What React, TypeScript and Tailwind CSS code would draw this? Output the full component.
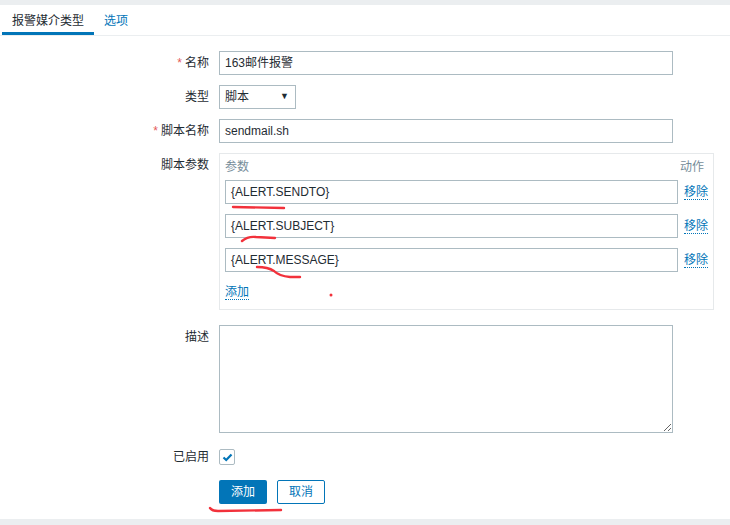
import React, { useState } from 'react'

const font = { fontFamily: '"Liberation Sans", Arial, "Noto Sans CJK SC", sans-serif' }

const Label = ({ text, req }: { text: string; req?: boolean }) => (
  <div className="flex justify-end pt-[4px] h-[24px] leading-[16px] text-[12px] text-[#1f2c33]">
    {req && <span className="text-[#e45959] mr-[3px]">*</span>}
    {text}
  </div>
)

const Input = ({ value, w = 'w-[454px]' }: { value: string; w?: string }) => (
  <div className={`${w} h-[24px] border border-[#acbbc2] bg-white px-[5px] flex items-center text-[12px] text-[#1f2c33]`}>
    {value}
  </div>
)

const Link = ({ text }: { text: string }) => (
  <span className="text-[12px] text-[#0275b8] border-b border-dotted border-[#0275b8] leading-[14px]">{text}</span>
)

export default function App() {
  const [params] = useState(['{ALERT.SENDTO}', '{ALERT.SUBJECT}', '{ALERT.MESSAGE}'])

  return (
    <div className="relative w-[730px] h-[525px] bg-[#ebeef0] pt-[5px] overflow-hidden" style={font}>
      <div className="bg-white h-[514px]">
        {/* tabs */}
        <div className="flex h-[31px] pl-[2px] border-b border-[#ebeef0] text-[12px]">
          <div className="px-[10px] pt-[7px] text-[#1f2c33] border-b-[3px] border-[#0275b8]">报警媒介类型</div>
          <div className="px-[10px] pt-[7px] text-[#0275b8]">选项</div>
        </div>

        <div className="grid grid-cols-[209px_1fr] gap-x-[10px] pt-[15px]">
          <Label text="名称" req />
          <Input value="163邮件报警" />

          <div className="col-span-2 h-[10px]" />
          <Label text="类型" />
          <div className="w-[77px] h-[24px] border border-[#acbbc2] px-[5px] flex items-center justify-between text-[12px] text-[#1f2c33]">
            <span>脚本</span>
            <span className="text-[9px] mr-[1px]">▼</span>
          </div>

          <div className="col-span-2 h-[10px]" />
          <Label text="脚本名称" req />
          <Input value="sendmail.sh" />

          <div className="col-span-2 h-[10px]" />
          <Label text="脚本参数" />
          <div className="w-[495px] h-[157px] border border-[#e6e9eb] px-[5px] pt-[4px]">
            <div className="flex justify-between h-[22px] leading-[18px] text-[12px] text-[#768d99]">
              <span>参数</span>
              <span className="mr-[4px]">动作</span>
            </div>
            {params.map((p) => (
              <div key={p} className="flex items-center gap-[6px] mb-[10px]">
                <Input value={p} w="w-[453px]" />
                <Link text="移除" />
              </div>
            ))}
            <div className="-mt-[3px]">
              <Link text="添加" />
            </div>
          </div>

          <div className="col-span-2 h-[15px]" />
          <Label text="描述" />
          <textarea className="w-[454px] h-[108px] border border-[#acbbc2] outline-none" readOnly />

          <div className="col-span-2 h-[16px]" />
          <div className="flex justify-end h-[16px] leading-[16px] text-[12px] text-[#1f2c33]">已启用</div>
          <div className="w-[16px] h-[16px] border border-[#acbbc2] rounded-[2px] flex items-center justify-center">
            <svg width="11" height="9" viewBox="0 0 11 9">
              <path d="M1.5 4.5 L4.2 7 L9.5 1.5" fill="none" stroke="#0275b8" strokeWidth="2.2" />
            </svg>
          </div>

          <div className="col-span-2 h-[15px]" />
          <div />
          <div className="flex gap-[10px]">
            <button className="w-[48px] h-[24px] rounded-[2px] bg-[#0275b8] text-white text-[12px]">添加</button>
            <button className="w-[48px] h-[24px] rounded-[2px] border border-[#0275b8] bg-white text-[#0275b8] text-[12px]">取消</button>
          </div>
        </div>
      </div>

      {/* red hand-drawn marks */}
      <svg className="absolute left-0 top-0 pointer-events-none" width="730" height="525">
        <g fill="none" stroke="#f2313b" strokeWidth="2.4" strokeLinecap="round">
          <path d="M233 207 L284 208" />
          <path d="M242 241 Q248 236 256 237 L275 238" />
          <path d="M257 267 Q268 267 274 271 Q279 276 290 277 L300 277" />
          <path d="M210 508 Q212 511 218 511 L281 510" />
        </g>
        <circle cx="331" cy="295" r="1.5" fill="#f2313b" />
      </svg>
    </div>
  )
}
